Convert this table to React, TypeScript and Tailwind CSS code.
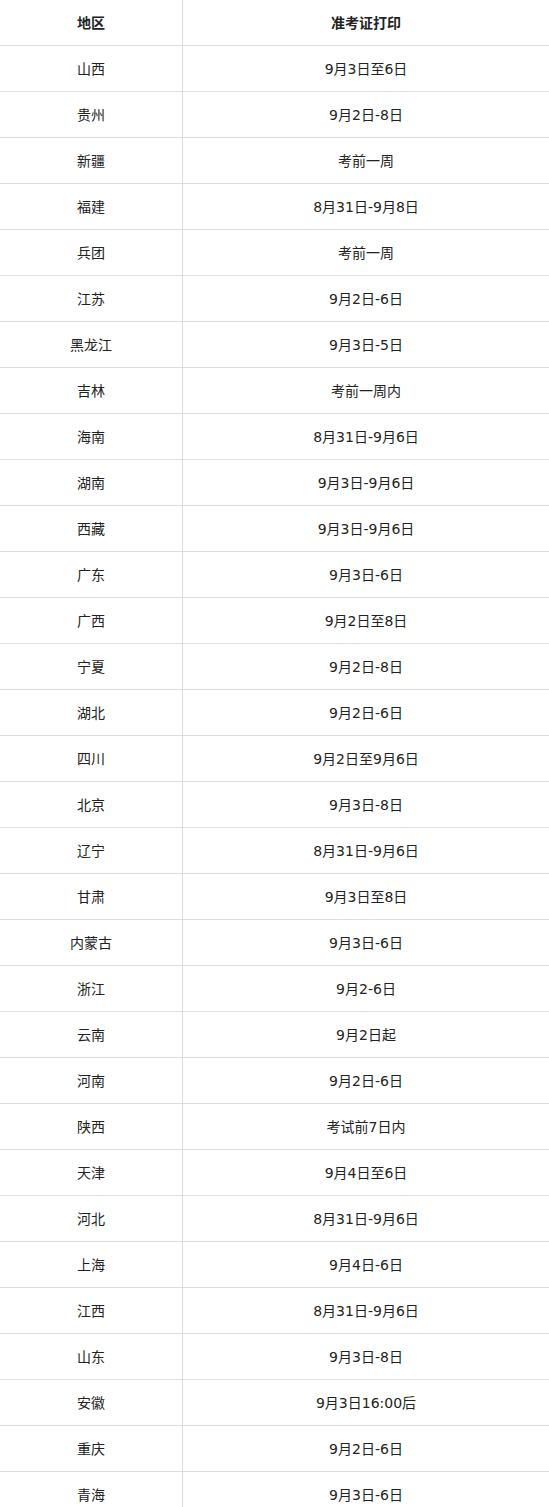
import React from 'react';

type Row = {
  region: string;
  date: string;
};

const rows: Row[] = [
  { region: '山西', date: '9月3日至6日' },
  { region: '贵州', date: '9月2日-8日' },
  { region: '新疆', date: '考前一周' },
  { region: '福建', date: '8月31日-9月8日' },
  { region: '兵团', date: '考前一周' },
  { region: '江苏', date: '9月2日-6日' },
  { region: '黑龙江', date: '9月3日-5日' },
  { region: '吉林', date: '考前一周内' },
  { region: '海南', date: '8月31日-9月6日' },
  { region: '湖南', date: '9月3日-9月6日' },
  { region: '西藏', date: '9月3日-9月6日' },
  { region: '广东', date: '9月3日-6日' },
  { region: '广西', date: '9月2日至8日' },
  { region: '宁夏', date: '9月2日-8日' },
  { region: '湖北', date: '9月2日-6日' },
  { region: '四川', date: '9月2日至9月6日' },
  { region: '北京', date: '9月3日-8日' },
  { region: '辽宁', date: '8月31日-9月6日' },
  { region: '甘肃', date: '9月3日至8日' },
  { region: '内蒙古', date: '9月3日-6日' },
  { region: '浙江', date: '9月2-6日' },
  { region: '云南', date: '9月2日起' },
  { region: '河南', date: '9月2日-6日' },
  { region: '陕西', date: '考试前7日内' },
  { region: '天津', date: '9月4日至6日' },
  { region: '河北', date: '8月31日-9月6日' },
  { region: '上海', date: '9月4日-6日' },
  { region: '江西', date: '8月31日-9月6日' },
  { region: '山东', date: '9月3日-8日' },
  { region: '安徽', date: '9月3日16:00后' },
  { region: '重庆', date: '9月2日-6日' },
  { region: '青海', date: '9月3日-6日' },
];

const cellLeft = 'flex h-[46px] items-center justify-center border-b border-r border-[#dddddd] pt-[2px]';
const cellRight = 'flex h-[46px] items-center justify-center border-b border-[#dddddd] pt-[2px]';

export default function App() {
  return (
    <div className="w-[549px] bg-white font-['DejaVu_Sans','Noto_Sans_CJK_SC',sans-serif] text-[14px] text-[#222222]">
      {/* Header */}
      <div className="grid grid-cols-[183px_1fr]">
        <div className={`${cellLeft} font-bold`}>地区</div>
        <div className={`${cellRight} font-bold`}>准考证打印</div>
      </div>

      {rows.map((row) => (
        <div key={row.region} className="grid grid-cols-[183px_1fr]">
          <div className={cellLeft}>{row.region}</div>
          <div className={cellRight}>{row.date}</div>
        </div>
      ))}
    </div>
  );
}
